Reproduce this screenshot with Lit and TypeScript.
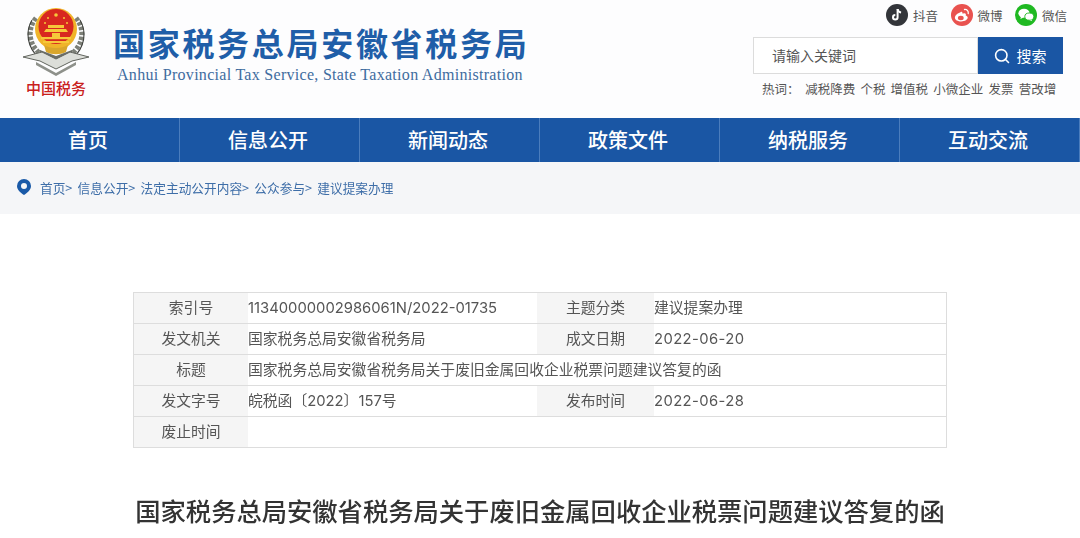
import { LitElement, html, css } from "lit";
import { customElement } from "lit/decorators.js";

const emblem = html`<svg class="emblem" viewBox="0 0 68 72" width="68" height="72" aria-hidden="true">
  <g fill="none" stroke="#7d8078" stroke-width="5" stroke-dasharray="3.500 1.500">
    <path d="M14 12 C5 23 6 39 20 49"/>
    <path d="M54 12 C63 23 62 39 48 49"/>
  </g>
  <g fill="none" stroke="#3e403c" stroke-width="1.100">
    <path d="M10 14 C3 26 5 41 17 52"/>
    <path d="M58 14 C65 26 63 41 51 52"/>
  </g>
  <circle cx="34" cy="23" r="21" fill="#f0b429"/>
  <circle cx="34" cy="20.500" r="17.500" fill="#d8281f"/>
  <g fill="#f6c83a">
    <circle cx="34" cy="9" r="1.800"/><circle cx="26" cy="12" r="1"/><circle cx="42" cy="12" r="1"/>
    <circle cx="23" cy="17" r="1"/><circle cx="45" cy="17" r="1"/>
    <path d="M24 23 L44 23 L46 26 L22 26 Z"/>
    <rect x="26" y="19" width="16" height="3"/>
    <rect x="19" y="31" width="30" height="2.200"/>
    <rect x="21" y="35" width="26" height="2"/>
  </g>
  <path d="M30 27h8v4h-8z" fill="#f6c83a"/>
  <path d="M22 39 C28 43 40 43 46 39 L44 46 C38 49 30 49 24 46 Z" fill="#d9a62c"/>
  <path d="M18 44 L34 50 L50 44 L50 50 L34 57 L18 50 Z" fill="#6b6e68"/>
  <path d="M1 51 L20 46 L34 53 L48 46 L67 51 L50 55 L34 63 L18 55 Z" fill="#dcded9" stroke="#62655f" stroke-width="1"/>
  <path d="M14 56 L34 67 L54 56 L54 59 L34 70 L14 59 Z" fill="#8e918b"/>
</svg>`;

const tiktok = html`<svg class="soc" viewBox="0 0 22 22" width="22" height="22" aria-hidden="true">
  <circle cx="11" cy="11" r="11" fill="#33353a"/>
  <path d="M11.600 5v8.300a2.300 2.300 0 1 1-2.300-2.300" fill="none" stroke="#fff" stroke-width="2"/>
  <path d="M11.600 5.200c.3 1.900 1.600 3 3.500 3.200" fill="none" stroke="#fff" stroke-width="2"/>
</svg>`;

const weibo = html`<svg class="soc" viewBox="0 0 22 22" width="22" height="22" aria-hidden="true">
  <circle cx="11" cy="11" r="11" fill="#e9524f"/>
  <path d="M9.500 8.200c-3 .9-5.600 3.200-5.600 5.500 0 2.200 3 3.700 6.300 3.700 3.900 0 6.500-2 6.500-3.900 0-1.300-1.200-1.900-2-2.100.5-1.300.1-2.100-1.200-2.200-.8-.1-1.600.2-2.100.4.2-1.300-.4-2.300-1.900-1.400z" fill="#fff"/>
  <ellipse cx="9.800" cy="14" rx="2.900" ry="2.200" fill="#e9524f"/>
  <path d="M13.500 5.500c2.300-.3 4.300 1.500 3.700 4" fill="none" stroke="#fff" stroke-width="1.300" stroke-linecap="round"/>
</svg>`;

const wechat = html`<svg class="soc" viewBox="0 0 22 22" width="22" height="22" aria-hidden="true">
  <circle cx="11" cy="11" r="11" fill="#1fb922"/>
  <ellipse cx="9" cy="9.300" rx="5.600" ry="4.500" fill="#fff"/>
  <path d="M6 12.500 L5.400 15 L8.500 13.500 Z" fill="#fff"/>
  <ellipse cx="14.300" cy="12.600" rx="4.500" ry="3.600" fill="#fff" stroke="#1fb922" stroke-width="0.900"/>
  <path d="M16.300 15.500 L17.300 17.300 L14.500 16 Z" fill="#fff"/>
</svg>`;

const searchIcon = html`<svg class="sicon" viewBox="0 0 16 16" width="16" height="16" aria-hidden="true">
  <circle cx="7.300" cy="7.300" r="5.700" fill="none" stroke="#fff" stroke-width="1.600"/>
  <path d="M11.300 11.300 L14.500 14.500" stroke="#fff" stroke-width="1.600" stroke-linecap="round"/>
</svg>`;

const pin = html`<svg class="pin" viewBox="0 0 14 16" width="14" height="16" aria-hidden="true">
  <path fill-rule="evenodd" d="M7 0a7 7 0 0 1 7 7c0 3.800-3.800 6.900-7 9-3.200-2.100-7-5.200-7-9a7 7 0 0 1 7-7zm0 4a3 3 0 1 0 0 6 3 3 0 0 0 0-6z" fill="#1a5aa8"/>
</svg>`;

const NAV = ["首页", "信息公开", "新闻动态", "政策文件", "纳税服务", "互动交流"];
const HOT = ["减税降费", "个税", "增值税", "小微企业", "发票", "营改增"];

@customElement("app-root")
export class AppRoot extends LitElement {
  static styles = css`
    :host {
      display: block;
      width: 1080px;
      height: 538px;
      overflow: hidden;
      background: #fff;
      font-family: "Noto Sans CJK SC", "Noto Sans", sans-serif;
      color: #555;
    }
    .page { filter: blur(0.5px); }
    .header {
      height: 118px;
      display: flex;
      justify-content: space-between;
      background: #fdfdfe;
    }
    .brand { display: flex; padding: 6px 0 0 22px; }
    .mark { display: flex; flex-direction: column; align-items: center; width: 68px; }
    .emblem { display: block; }
    .seal {
      font-size: 15px;
      line-height: 20px;
      font-weight: 500;
      color: #c9201c;
      white-space: nowrap;
    }
    .names { padding: 15px 0 0 23px; }
    .cn {
      font-size: 32px;
      line-height: 42px;
      font-weight: 700;
      letter-spacing: 2.700px;
      color: #1f5ea8;
      white-space: nowrap;
    }
    .en {
      font-family: "Liberation Serif", serif;
      font-size: 16px;
      letter-spacing: 0.290px;
      line-height: 20px;
      margin: 2px 0 0 4px;
      color: #3f6c9f;
      white-space: nowrap;
    }
    .tools { width: 327px; display: flex; flex-direction: column; }
    .social {
      display: flex;
      align-items: center;
      padding: 4px 0 0 133px;
      height: 22px;
    }
    .social span { font-size: 12.5px; color: #555; margin: 0 12.500px 0 5px; white-space: nowrap; }
    .soc { display: block; flex: none; }
    .search { display: flex; margin-top: 11px; height: 37px; }
    .box {
      box-sizing: border-box;
      width: 225px;
      border: 1px solid #dcdcdc;
      background: #fff;
      font-size: 14px;
      line-height: 35px;
      padding-left: 18px;
      color: #555;
    }
    .btn {
      width: 85px;
      background: #1a56a4;
      color: #fff;
      font-size: 15px;
      display: flex;
      align-items: center;
      justify-content: center;
      gap: 6px;
    }
    .sicon { display: block; }
    .hot {
      display: flex;
      gap: 5.200px;
      font-size: 12.5px;
      line-height: 18px;
      color: #555;
      margin: 6px 0 0 9px;
      white-space: nowrap;
    }
    .hot b { font-weight: 400; width: 38px; }
    .nav {
      height: 44px;
      display: grid;
      grid-template-columns: repeat(6, 180px);
      background: #1a56a4;
    }
    .nav div {
      box-sizing: border-box;
      border-right: 1px solid #4b7dbd;
      padding-right: 3px;
      color: #fff;
      font-size: 20px;
      font-weight: 500;
      line-height: 44px;
      text-align: center;
    }
    .crumb {
      box-sizing: border-box;
      height: 52px;
      padding: 0 0 2px 17px;
      background: #f5f6f8;
      display: flex;
      align-items: center;
      gap: 9px;
      font-size: 12.700px;
      color: #3e6ea8;
      white-space: nowrap;
    }
    .pin { display: block; }
    .trail { display: flex; gap: 5.200px; }
    .meta {
      box-sizing: border-box;
      margin: 78px 0 0 133px;
      width: 814px;
      display: grid;
      grid-template-columns: 114px 289px 117px 1fr;
      grid-auto-rows: 31px;
      border-top: 1px solid #ddd;
      border-left: 1px solid #ddd;
      border-right: 1px solid #ddd;
      font-family: Inter, "Noto Sans CJK SC", sans-serif;
      font-size: 14.800px;
      color: #555;
    }
    .meta > div {
      box-sizing: border-box;
      border-bottom: 1px solid #ddd;
      padding-top: 1px;
      line-height: 29px;
      white-space: nowrap;
    }
    .meta > .date { letter-spacing: 0.400px; }
    .k { background: #f5f5f5; text-align: center; }
    .wide { grid-column: 2 / 5; }
    .title {
      margin: 44px 0 0;
      text-align: center;
      font-size: 25.300px;
      line-height: 36px;
      font-weight: 500;
      color: #333;
      white-space: nowrap;
    }
  `;

  render() {
    return html`<div class="page">
      <header class="header">
        <div class="brand">
          <div class="mark">${emblem}<div class="seal">中国税务</div></div>
          <div class="names">
            <div class="cn">国家税务总局安徽省税务局</div>
            <div class="en">Anhui Provincial Tax Service, State Taxation Administration</div>
          </div>
        </div>
        <div class="tools">
          <div class="social">
            ${tiktok}<span>抖音</span>${weibo}<span>微博</span>${wechat}<span>微信</span>
          </div>
          <div class="search">
            <div class="box">请输入关键词</div>
            <div class="btn">${searchIcon}搜索</div>
          </div>
          <div class="hot"><b>热词：</b>${HOT.map((h) => html`<span>${h}</span>`)}</div>
        </div>
      </header>
      <nav class="nav">${NAV.map((n) => html`<div>${n}</div>`)}</nav>
      <div class="crumb">${pin}<div class="trail">
        <span>首页&gt;</span><span>信息公开&gt;</span><span>法定主动公开内容&gt;</span><span>公众参与&gt;</span><span>建议提案办理</span>
      </div></div>
      <section class="meta">
        <div class="k">索引号</div><div>11340000002986061N/2022-01735</div><div class="k">主题分类</div><div>建议提案办理</div>
        <div class="k">发文机关</div><div>国家税务总局安徽省税务局</div><div class="k">成文日期</div><div class="date">2022-06-20</div>
        <div class="k">标题</div><div class="wide">国家税务总局安徽省税务局关于废旧金属回收企业税票问题建议答复的函</div>
        <div class="k">发文字号</div><div>皖税函〔2022〕157号</div><div class="k">发布时间</div><div class="date">2022-06-28</div>
        <div class="k">废止时间</div><div class="wide"></div>
      </section>
      <h1 class="title">国家税务总局安徽省税务局关于废旧金属回收企业税票问题建议答复的函</h1>
    </div>`;
  }
}
